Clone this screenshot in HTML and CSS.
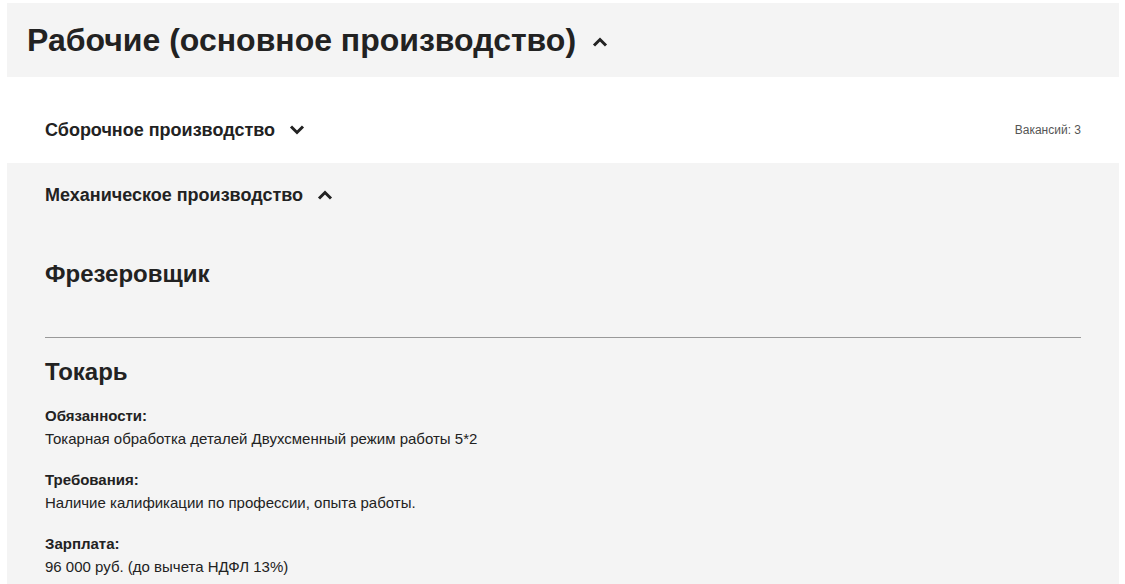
FILE: index.html
```html
<!DOCTYPE html>
<html lang="ru">
<head>
<meta charset="utf-8">
<link rel="stylesheet" href="styles.css">
</head>
<body>
<div class="page">
  <div class="group-head">
    <h1 class="group-title">Рабочие (основное производство)</h1>
    <svg class="chev chev-lg" viewBox="0 0 16 10"><path d="M2 8.5 L8 2.5 L14 8.5" /></svg>
  </div>

  <div class="dept">
    <div class="dept-head">
      <h2 class="dept-title">Сборочное производство</h2>
      <svg class="chev" viewBox="0 0 16 10"><path d="M2 1.5 L8 7.5 L14 1.5" /></svg>
      <span class="count">Вакансий: 3</span>
    </div>
  </div>

  <div class="dept open">
    <div class="dept-head">
      <h2 class="dept-title">Механическое производство</h2>
      <svg class="chev" viewBox="0 0 16 10"><path d="M2 8.5 L8 2.5 L14 8.5" /></svg>
    </div>
    <div class="vacancies">
      <div class="vacancy first">
        <h3 class="vac-title">Фрезеровщик</h3>
      </div>
      <div class="vacancy">
        <h3 class="vac-title vac-title-lg">Токарь</h3>
        <div class="field">
          <div class="label">Обязанности:</div>
          <div class="value">Токарная обработка деталей Двухсменный режим работы 5*2</div>
        </div>
        <div class="field">
          <div class="label">Требования:</div>
          <div class="value">Наличие калификации по профессии, опыта работы.</div>
        </div>
        <div class="field">
          <div class="label">Зарплата:</div>
          <div class="value">96 000 руб. (до вычета НДФЛ 13%)</div>
        </div>
      </div>
    </div>
  </div>
</div>
</body>
</html>
```

FILE: styles.css
```css
* { box-sizing: border-box; }
html, body { margin: 0; padding: 0; background: #fff; }
body {
  font-family: "Liberation Sans", Arial, sans-serif;
  color: #222;
  overflow: hidden;
}
.page {
  padding: 3px 6px 0 7px;
}
.group-head {
  background: #f4f4f4;
  height: 74px;
  display: flex;
  align-items: center;
  padding-left: 20px;
  gap: 16px;
}
.group-title {
  margin: 0;
  font-size: 32px;
  font-weight: bold;
  color: #222;
}
.chev {
  width: 16px;
  height: 10px;
  fill: none;
  stroke: #222;
  stroke-width: 3;
  flex: none;
}
.chev-lg { margin-top: 4px; }
.dept {
  background: #fff;
}
.dept.open {
  background: #f4f4f4;
  padding-bottom: 40px;
}
.dept-head {
  height: 86px;
  padding: 20px 38px 0;
  display: flex;
  align-items: center;
  gap: 14px;
}
.dept.open .dept-head {
  height: 64px;
  padding-top: 0;
}
.dept-title {
  margin: 0;
  font-size: 18px;
  font-weight: bold;
  color: #222;
}
.count {
  margin-left: auto;
  font-size: 12px;
  color: #555;
}
.vacancies {
  padding: 0 38px;
}
.vacancy.first {
  padding-top: 30px;
  padding-bottom: 46px;
  border-bottom: 1px solid #999;
}
.vac-title {
  margin: 0;
  font-size: 24px;
  font-weight: bold;
  line-height: 34px;
  color: #222;
}
.vac-title-lg {
  margin-top: 17px;
  margin-bottom: 15px;
}
.field {
  margin-bottom: 18px;
}
.label {
  font-size: 15px;
  font-weight: bold;
  line-height: 23px;
}
.value {
  font-size: 15px;
  line-height: 23px;
}
```
